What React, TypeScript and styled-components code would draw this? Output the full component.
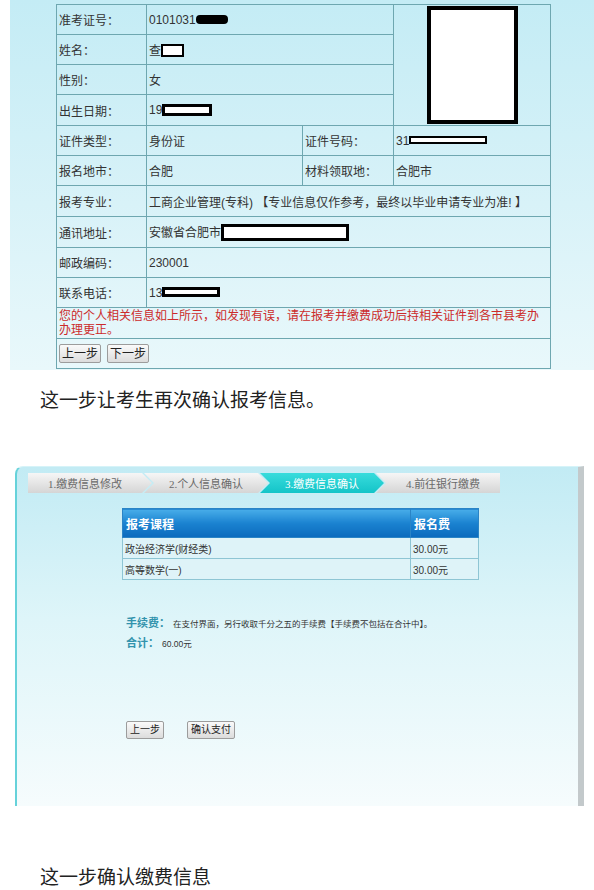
import styled, { createGlobalStyle } from "styled-components";

const GlobalStyle = createGlobalStyle`
  html, body {
    margin: 0;
    padding: 0;
    background: #fff;
  }
  body {
    font-family: "Liberation Sans", "Noto Sans CJK SC", sans-serif;
  }
`;

const Page = styled.div`
  width: 594px;
  padding-bottom: 10px;
`;

/* ---------- first screenshot: personal info ---------- */

const InfoShot = styled.div`
  margin-left: 10px;
  width: 584px;
  height: 370px;
  box-sizing: border-box;
  padding: 4px 0 0 46px;
  background: linear-gradient(180deg, #c4ecf5 0%, #d8f2f8 55%, #e9f8fb 100%);
`;

const InfoTable = styled.table`
  border-collapse: collapse;
  table-layout: fixed;
  width: 494px;
  font-size: 12px;
  color: #333;
`;

const InfoRow = styled.tr<{ $h?: number }>`
  height: ${(p) => p.$h ?? 30}px;
`;

const Cell = styled.td`
  border: 1px solid #6ea7b0;
  padding: 0 2px;
  vertical-align: middle;
  white-space: nowrap;
  overflow: hidden;
`;

const PhotoCell = styled(Cell)`
  text-align: center;
  padding: 0;
`;

const NoteCell = styled(Cell)`
  white-space: normal;
  color: #cc2b2b;
  line-height: 14px;
`;

const Photo = styled.span`
  display: inline-block;
  width: 91px;
  height: 118px;
  box-sizing: border-box;
  border: 4px solid #000;
  background: #fff;
  vertical-align: middle;
`;

const Blot = styled.span<{ $w: number; $h: number; $b?: number; $solid?: boolean }>`
  display: inline-block;
  width: ${(p) => p.$w}px;
  height: ${(p) => p.$h}px;
  box-sizing: border-box;
  border: ${(p) => p.$b ?? 2}px solid #000;
  border-radius: ${(p) => (p.$solid ? 4 : 0)}px;
  background: ${(p) => (p.$solid ? "#000" : "#fff")};
  vertical-align: middle;
  margin-top: -2px;
`;

const ButtonRow = styled.div<{ $gap: number }>`
  display: flex;
  gap: ${(p) => p.$gap}px;
`;

const Button = styled.button<{ $small?: boolean }>`
  height: ${(p) => (p.$small ? 18 : 19)}px;
  padding: 0 ${(p) => (p.$small ? 3 : 2)}px;
  font-family: "Liberation Sans", "Noto Sans CJK SC", sans-serif;
  font-size: ${(p) => (p.$small ? 10 : 12)}px;
  line-height: 1;
  color: #222;
  background: linear-gradient(180deg, #fafafa 0%, #dcdcdc 100%);
  border: 1px solid #9c9c9c;
  border-radius: 2px;
`;

/* ---------- captions ---------- */

const Caption = styled.p<{ $top: number }>`
  margin: ${(p) => p.$top}px 0 0;
  padding-left: 40px;
  font-size: 19px;
  line-height: 22px;
  color: #222;
  font-family: "Noto Sans CJK SC", sans-serif;
`;

/* ---------- second screenshot: fee confirm ---------- */

const FeeShot = styled.div`
  margin: 56px 0 0 15px;
  width: 569px;
  height: 340px;
  box-sizing: border-box;
  padding: 6px 0 0 11px;
  border-left: 2px solid #66d2da;
  border-right: 6px solid #c3c9cb;
  border-top: 1px solid #d6f3f8;
  border-top-left-radius: 8px;
  background: linear-gradient(180deg, #c2ebf4 0%, #def5f9 45%, #f6fcfd 100%);
`;

const Steps = styled.div`
  display: flex;
  height: 20px;
`;

const Step = styled.div<{ $active?: boolean; $pos: "first" | "mid" | "last" }>`
  width: 124px;
  height: 20px;
  margin-left: ${(p) => (p.$pos === "first" ? 0 : -8)}px;
  padding-left: ${(p) => (p.$pos === "first" ? 0 : 10)}px;
  padding-right: ${(p) => (p.$pos === "last" ? 0 : 10)}px;
  box-sizing: border-box;
  display: flex;
  align-items: center;
  justify-content: center;
  font-size: 11px;
  font-family: "Liberation Serif", "Noto Sans CJK SC", serif;
  color: ${(p) => (p.$active ? "#fff" : "#6a6a6a")};
  background: ${(p) =>
    p.$active
      ? "linear-gradient(180deg, #38dcdc 0%, #14c4c8 100%)"
      : "linear-gradient(180deg, #f6f6f6 0%, #d5d5d5 100%)"};
  clip-path: ${(p) =>
    p.$pos === "first"
      ? "polygon(0 0, calc(100% - 10px) 0, 100% 50%, calc(100% - 10px) 100%, 0 100%)"
      : p.$pos === "last"
      ? "polygon(0 0, 100% 0, 100% 100%, 0 100%, 10px 50%)"
      : "polygon(0 0, calc(100% - 10px) 0, 100% 50%, calc(100% - 10px) 100%, 0 100%, 10px 50%)"};
`;

const FeeTable = styled.table`
  margin: 15px 0 0 94px;
  border-collapse: collapse;
  table-layout: fixed;
  width: 356px;
  font-size: 10px;
  color: #333;
`;

const HeadCell = styled.th`
  height: 28px;
  padding: 0 3px;
  text-align: left;
  font-size: 12px;
  font-weight: bold;
  color: #fff;
  border: 1px solid #2a84c6;
  background: linear-gradient(180deg, #48ade9 0%, #1a82d0 50%, #0b6abd 100%);
`;

const FeeCell = styled.td`
  height: 20px;
  padding: 0 2px;
  border: 1px solid #8ec5d4;
  background: #def3f8;
  white-space: nowrap;
`;

const FeeNotes = styled.div`
  margin: 33px 0 0 98px;
`;

const NoteLine = styled.div`
  display: flex;
  align-items: baseline;
  height: 20px;
  line-height: 20px;
`;

const NoteLabel = styled.span<{ $w: number }>`
  width: ${(p) => p.$w}px;
  font-size: 11px;
  font-weight: bold;
  color: #3293ad;
`;

const NoteText = styled.span`
  font-size: 8.5px;
  color: #333;
`;

const FeeActions = styled.div`
  margin: 68px 0 0 98px;
`;

const steps = ["1.缴费信息修改", "2.个人信息确认", "3.缴费信息确认", "4.前往银行缴费"];

const courses = [
  { name: "政治经济学(财经类)", fee: "30.00元" },
  { name: "高等数学(一)", fee: "30.00元" },
];

export default function App() {
  return (
    <Page>
      <GlobalStyle />
      <InfoShot>
        <InfoTable>
          <colgroup>
            <col style={{ width: 90 }} />
            <col style={{ width: 156 }} />
            <col style={{ width: 91 }} />
            <col style={{ width: 157 }} />
          </colgroup>
          <tbody>
            <InfoRow>
              <Cell>准考证号：</Cell>
              <Cell colSpan={2}>
                0101031
                <Blot $w={32} $h={9} $solid />
              </Cell>
              <PhotoCell rowSpan={4}>
                <Photo />
              </PhotoCell>
            </InfoRow>
            <InfoRow>
              <Cell>姓名：</Cell>
              <Cell colSpan={2}>
                查<Blot $w={23} $h={13} />
              </Cell>
            </InfoRow>
            <InfoRow>
              <Cell>性别：</Cell>
              <Cell colSpan={2}>女</Cell>
            </InfoRow>
            <InfoRow $h={31}>
              <Cell>出生日期：</Cell>
              <Cell colSpan={2}>
                19<Blot $w={50} $h={12} $b={3} />
              </Cell>
            </InfoRow>
            <InfoRow>
              <Cell>证件类型：</Cell>
              <Cell>身份证</Cell>
              <Cell>证件号码：</Cell>
              <Cell>
                31<Blot $w={78} $h={8} />
              </Cell>
            </InfoRow>
            <InfoRow>
              <Cell>报名地市：</Cell>
              <Cell>合肥</Cell>
              <Cell>材料领取地：</Cell>
              <Cell>合肥市</Cell>
            </InfoRow>
            <InfoRow $h={31}>
              <Cell>报考专业：</Cell>
              <Cell colSpan={3}>工商企业管理(专科) 【专业信息仅作参考，最终以毕业申请专业为准! 】</Cell>
            </InfoRow>
            <InfoRow $h={31}>
              <Cell>通讯地址：</Cell>
              <Cell colSpan={3}>
                安徽省合肥市<Blot $w={128} $h={17} $b={3} />
              </Cell>
            </InfoRow>
            <InfoRow>
              <Cell>邮政编码：</Cell>
              <Cell colSpan={3}>230001</Cell>
            </InfoRow>
            <InfoRow>
              <Cell>联系电话：</Cell>
              <Cell colSpan={3}>
                13<Blot $w={58} $h={10} $b={3} />
              </Cell>
            </InfoRow>
            <InfoRow $h={31}>
              <NoteCell colSpan={4}>
                您的个人相关信息如上所示，如发现有误，请在报考并缴费成功后持相关证件到各市县考办办理更正。
              </NoteCell>
            </InfoRow>
            <InfoRow>
              <Cell colSpan={4}>
                <ButtonRow $gap={6}>
                  <Button>上一步</Button>
                  <Button>下一步</Button>
                </ButtonRow>
              </Cell>
            </InfoRow>
          </tbody>
        </InfoTable>
      </InfoShot>

      <Caption $top={18}>这一步让考生再次确认报考信息。</Caption>

      <FeeShot>
        <Steps>
          {steps.map((s, i) => (
            <Step
              key={s}
              $active={i === 2}
              $pos={i === 0 ? "first" : i === steps.length - 1 ? "last" : "mid"}
            >
              {s}
            </Step>
          ))}
        </Steps>

        <FeeTable>
          <colgroup>
            <col style={{ width: 288 }} />
            <col style={{ width: 68 }} />
          </colgroup>
          <thead>
            <tr>
              <HeadCell>报考课程</HeadCell>
              <HeadCell>报名费</HeadCell>
            </tr>
          </thead>
          <tbody>
            {courses.map((c) => (
              <tr key={c.name}>
                <FeeCell>{c.name}</FeeCell>
                <FeeCell>{c.fee}</FeeCell>
              </tr>
            ))}
          </tbody>
        </FeeTable>

        <FeeNotes>
          <NoteLine>
            <NoteLabel $w={47}>手续费：</NoteLabel>
            <NoteText>在支付界面，另行收取千分之五的手续费【手续费不包括在合计中】。</NoteText>
          </NoteLine>
          <NoteLine>
            <NoteLabel $w={36}>合计：</NoteLabel>
            <NoteText>60.00元</NoteText>
          </NoteLine>
        </FeeNotes>

        <FeeActions>
          <ButtonRow $gap={23}>
            <Button $small>上一步</Button>
            <Button $small>确认支付</Button>
          </ButtonRow>
        </FeeActions>
      </FeeShot>

      <Caption $top={59}>这一步确认缴费信息</Caption>
    </Page>
  );
}
